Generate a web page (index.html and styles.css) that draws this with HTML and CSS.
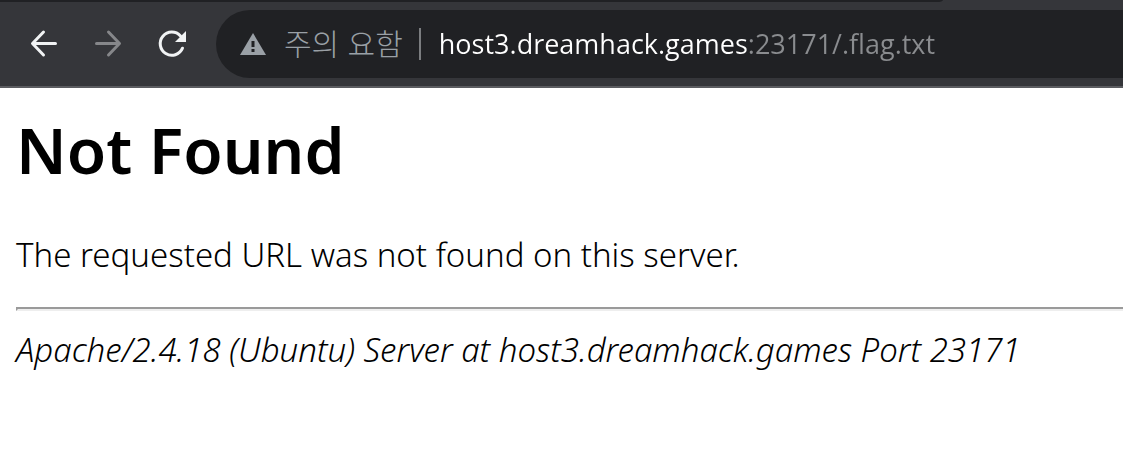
FILE: index.html
```html
<!DOCTYPE html>
<html lang="ko">
<head>
  <meta charset="UTF-8">
  <meta name="viewport" content="width=device-width, initial-scale=1.0">
  <title>404 Not Found</title>
  <link rel="stylesheet" href="styles.css">
</head>
<body>

  <div class="tab-strip"><div class="tab-edge"></div></div>

  <header class="toolbar">
    <nav class="nav-buttons">
      <button type="button" class="nav-btn" aria-label="뒤로">
        <svg viewBox="0 0 32 32"><path d="M27.500 15.500H5M15.500 4 4.500 15.500 15.500 27" fill="none" stroke="currentColor" stroke-width="3" stroke-linecap="round" stroke-linejoin="round"/></svg>
      </button>
      <button type="button" class="nav-btn" aria-label="앞으로" disabled>
        <svg viewBox="0 0 32 32"><path d="M4.500 15.500h22M16.500 4l11 11.500-11 11.500" fill="none" stroke="currentColor" stroke-width="3" stroke-linecap="round" stroke-linejoin="round"/></svg>
      </button>
      <button type="button" class="nav-btn" aria-label="새로고침">
        <svg viewBox="0 0 32 32"><path d="M26.500 20.200A11.600 11.600 0 1 1 24.500 8" fill="none" stroke="currentColor" stroke-width="3" stroke-linecap="round"/><path d="M30 3v11H19z" fill="currentColor"/></svg>
      </button>
    </nav>

    <div class="address-bar">
      <button type="button" class="security">
        <svg class="warning" viewBox="0 0 26 24"><path d="M13 1 26 23H0z" fill="currentColor"/><path d="M11.500 9h3v6h-3zM11.500 17h3v3h-3z" fill="#202124"/></svg>
        <span>주의 요함</span>
      </button>
      <input type="text" class="url" aria-label="주소창" value="host3.dreamhack.games:23171/.flag.txt" spellcheck="false">
    </div>
  </header>

  <main class="page">
    <h1>Not Found</h1>
    <p>The requested URL was not found on this server.</p>
    <hr>
    <address>Apache/2.4.18 (Ubuntu) Server at host3.dreamhack.games Port 23171</address>
  </main>

</body>
</html>
```
FILE: styles.css
```css
body {
  margin: 0;
  background: #fff;
  color: #000;
  font-family: "Noto Sans", "Noto Sans CJK KR", sans-serif;
  overflow-x: hidden;
}

.tab-strip {
  height: 2px;
  background: #35363a;
}

.tab-edge {
  width: 84%;
  height: 2px;
  background: #202124;
  border-bottom-right-radius: 6px 2px;
}

.toolbar {
  display: flex;
  align-items: center;
  gap: 28px;
  padding: 8px 0 8px 28px;
  background: #35363a;
  border-bottom: 2px solid #5b5c60;
}

.nav-buttons {
  display: flex;
  gap: 32px;
}

.nav-btn {
  width: 32px;
  height: 32px;
  padding: 0;
  border: none;
  background: none;
  color: #f1f3f4;
}

.nav-btn:disabled {
  color: #86878a;
}

.nav-btn svg {
  display: block;
}

.address-bar {
  display: flex;
  flex: 1;
  align-items: center;
  gap: 18px;
  min-width: 0;
  height: 68px;
  padding-left: 24px;
  background: #202124;
  border-radius: 34px 0 0 34px;
}

.security {
  display: flex;
  align-items: center;
  gap: 18px;
  height: 32px;
  padding: 0 16px 0 0;
  border: none;
  border-right: 2px solid #7b7d80;
  background: none;
  color: #9aa0a6;
  font-family: "Noto Sans CJK KR", sans-serif;
  font-size: 30px;
  font-weight: 300;
  line-height: 28px;
  white-space: nowrap;
}

.security span {
  padding-bottom: 4px;
}

.warning {
  width: 26px;
  height: 24px;
}

.url {
  flex: 1;
  min-width: 0;
  padding: 0;
  border: none;
  outline: none;
  /* host in white, port and path in grey */
  background: linear-gradient(to right, #fff 308px, #8a8c8f 308px);
  background-clip: text;
  -webkit-background-clip: text;
  color: transparent;
  caret-color: #fff;
  font-family: "Open Sans", sans-serif;
  font-size: 27px;
  line-height: 40px;
}

.page {
  padding: 14px 0 16px 16px;
}

h1 {
  margin: 0;
  font-size: 64px;
  font-weight: 600;
  line-height: 96px;
}

p {
  margin: 35px 0 30px;
  font-size: 33px;
  font-weight: 300;
  line-height: 44px;
}

hr {
  margin: 0 0 17px;
  border: 2px solid;
  border-color: #9a9a9a #eee #eee #9a9a9a;
  border-right: none;
}

address {
  font-size: 33px;
  font-weight: 300;
  line-height: 44px;
}
```
